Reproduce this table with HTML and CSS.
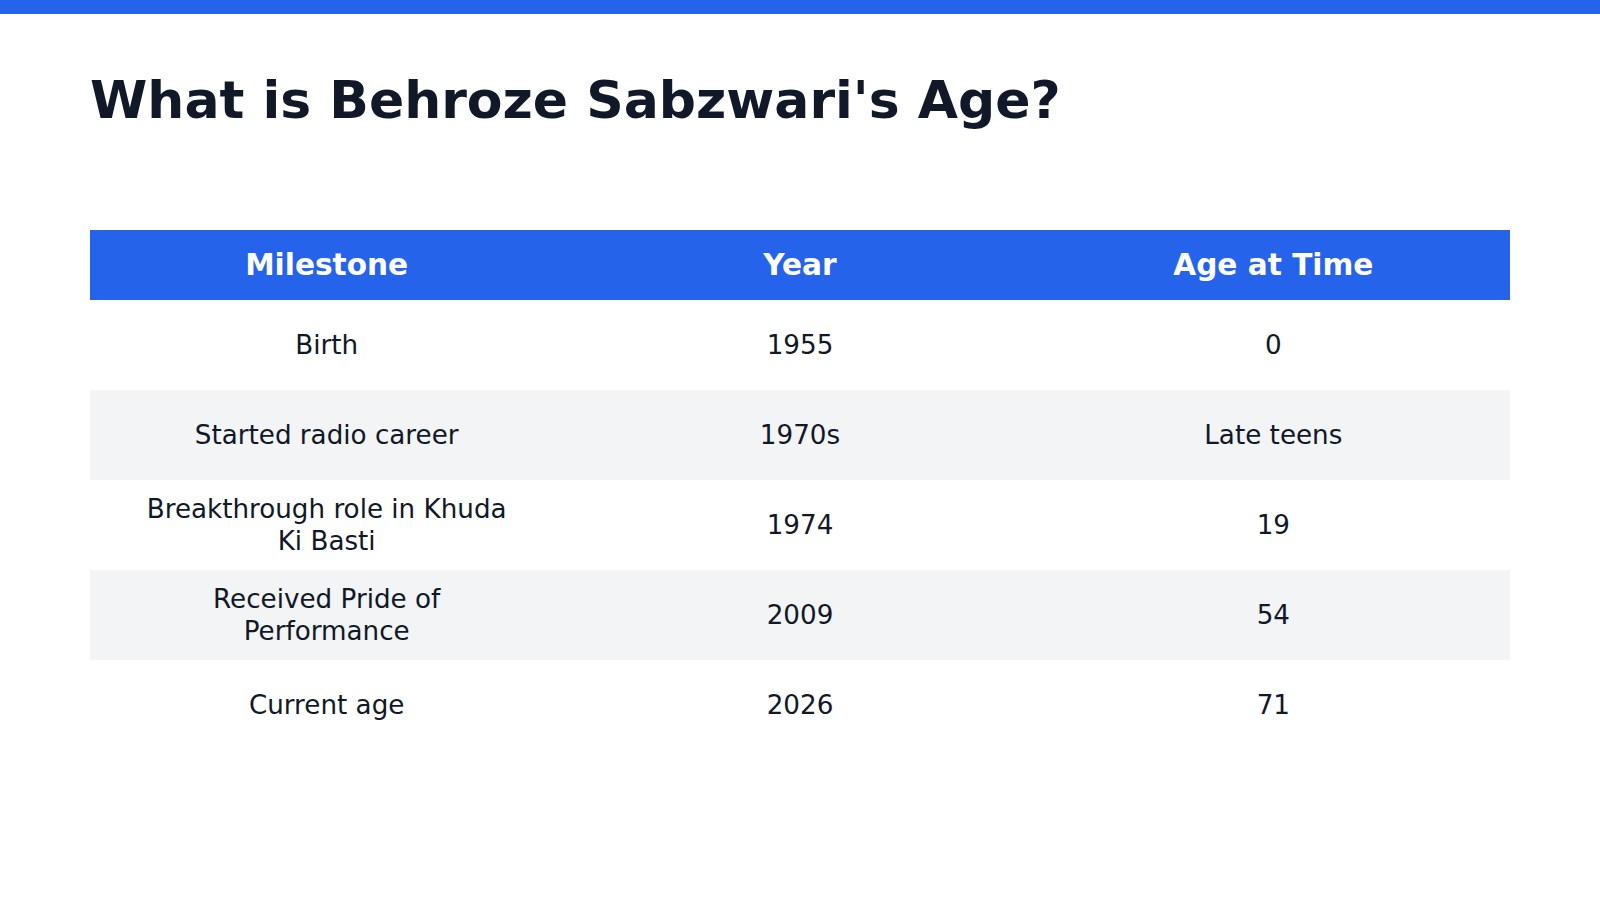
FILE: index.html
```html
<!DOCTYPE html>
<html lang="en">
<head>
<meta charset="utf-8">
<title>What is Behroze Sabzwari's Age?</title>
<link rel="stylesheet" href="styles.css">
</head>
<body>
<div class="topbar"></div>
<main class="page">
  <h1 class="title">What is Behroze Sabzwari's Age?</h1>
  <table class="data">
    <thead>
      <tr><th>Milestone</th><th>Year</th><th>Age at Time</th></tr>
    </thead>
    <tbody>
      <tr><td>Birth</td><td>1955</td><td>0</td></tr>
      <tr><td>Started radio career</td><td>1970s</td><td>Late teens</td></tr>
      <tr><td>Breakthrough role in Khuda Ki Basti</td><td>1974</td><td>19</td></tr>
      <tr><td>Received Pride of Performance</td><td>2009</td><td>54</td></tr>
      <tr><td>Current age</td><td>2026</td><td>71</td></tr>
    </tbody>
  </table>
</main>
</body>
</html>
```
FILE: styles.css
```css
html, body {
  margin: 0;
  padding: 0;
  background: #ffffff;
}
body {
  font-family: "DejaVu Sans", sans-serif;
  color: #111827;
}
.topbar {
  height: 14px;
  background: #2563eb;
}
.page {
  padding: 48px 90px 0;
}
.title {
  margin: 0;
  font-size: 52px;
  font-weight: 700;
  line-height: 76px;
  color: #111827;
}
.data {
  margin-top: 92px;
  width: 100%;
  border-collapse: collapse;
  table-layout: fixed;
}
.data th {
  background: #2563eb;
  color: #ffffff;
  font-size: 29.6px;
  font-weight: 700;
  height: 70px;
  padding: 0 50px;
  text-align: center;
}
.data td {
  height: 90px;
  padding: 0 50px;
  font-size: 26.2px;
  line-height: 32px;
  text-align: center;
  color: #111827;
  box-sizing: border-box;
}
.data tbody tr:nth-child(even) td {
  background: #f3f4f6;
}
```
